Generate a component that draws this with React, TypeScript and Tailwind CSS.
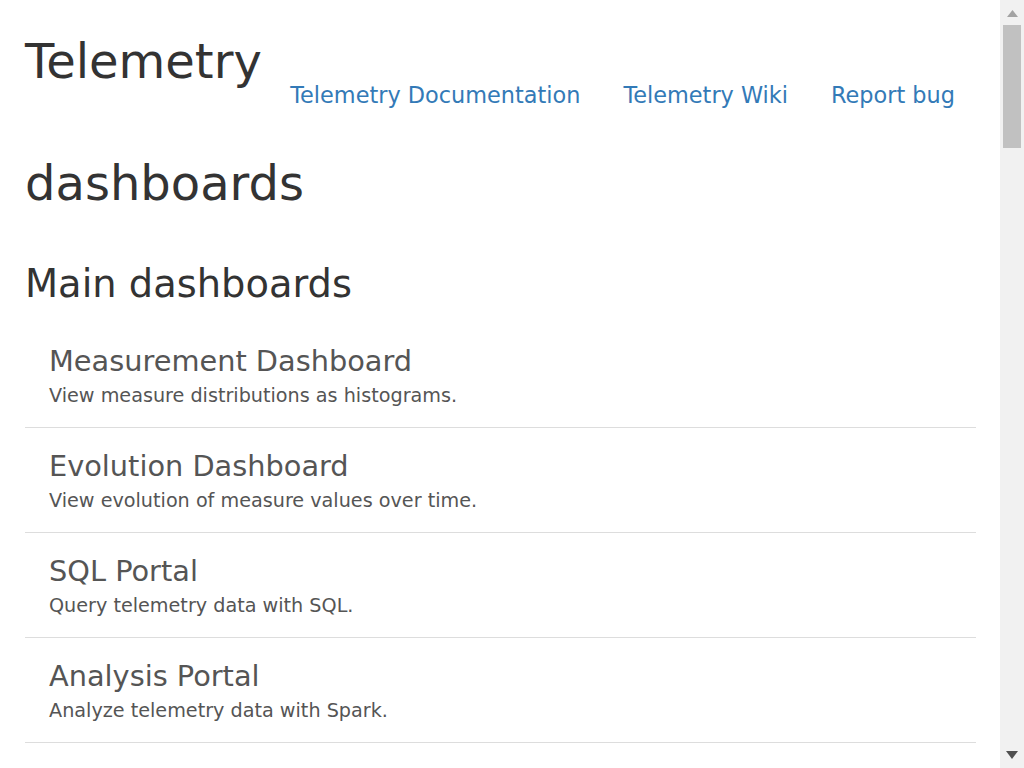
import React from "react";

type Item = { title: string; desc: string };

const items: Item[] = [
  { title: "Measurement Dashboard", desc: "View measure distributions as histograms." },
  { title: "Evolution Dashboard", desc: "View evolution of measure values over time." },
  { title: "SQL Portal", desc: "Query telemetry data with SQL." },
  { title: "Analysis Portal", desc: "Analyze telemetry data with Spark." },
];

function ListItem({ item }: { item: Item }) {
  return (
    <a
      href="#"
      className="block border-b border-[#dddddd] pl-[24px] pr-[24px] pt-[22px] pb-[18px] text-[#555555] no-underline"
    >
      <h4 className="m-0 mb-[5px] text-[28.8px] leading-[32px] font-normal">{item.title}</h4>
      <p className="m-0 text-[19.2px] leading-[27px]">{item.desc}</p>
    </a>
  );
}

function Scrollbar() {
  return (
    <div className="flex h-full w-[24px] shrink-0 flex-col bg-[#f1f1f1]">
      <div className="flex h-[24px] items-center justify-center">
        <svg width="11" height="7" viewBox="0 0 11 7" className="mt-[2px]">
          <polygon points="5.5,0 11,7 0,7" fill="#a3a3a3" />
        </svg>
      </div>
      <div className="flex-1 px-[3px] pt-[1px]">
        <div className="h-[123px] w-full bg-[#c1c1c1]" />
      </div>
      <div className="flex h-[24px] items-center justify-center">
        <svg width="12" height="8" viewBox="0 0 12 8" className="mb-[2px]">
          <polygon points="0,0 12,0 6,8" fill="#505050" />
        </svg>
      </div>
    </div>
  );
}

export default function App() {
  return (
    <div
      className="flex h-screen overflow-hidden bg-white"
      style={{ fontFamily: '"DejaVu Sans", Verdana, sans-serif' }}
    >
      <main className="flex-1 min-w-0 pl-[25px] pr-[24px] text-[#333333]">
        <div className="flex items-start">
          <h1 className="m-0 flex-1 min-w-0 text-[48px] leading-[122px] font-normal text-[#333333]">
            Telemetry dashboards
          </h1>
          <nav className="flex gap-[43px] pr-[21px] pt-[80px] text-[22.4px] leading-[30px]">
            <a href="#" className="text-[#337ab7] no-underline whitespace-nowrap">Telemetry Documentation</a>
            <a href="#" className="text-[#337ab7] no-underline whitespace-nowrap">Telemetry Wiki</a>
            <a href="#" className="text-[#337ab7] no-underline whitespace-nowrap">Report bug</a>
          </nav>
        </div>
        <section>
          <h2 className="m-0 mt-[18px] mb-[17px] text-[38.4px] leading-[44px] font-normal text-[#333333]">
            Main dashboards
          </h2>
          <div className="flex flex-col">
            {items.map((it) => (
              <ListItem key={it.title} item={it} />
            ))}
          </div>
        </section>
      </main>
      <Scrollbar />
    </div>
  );
}
